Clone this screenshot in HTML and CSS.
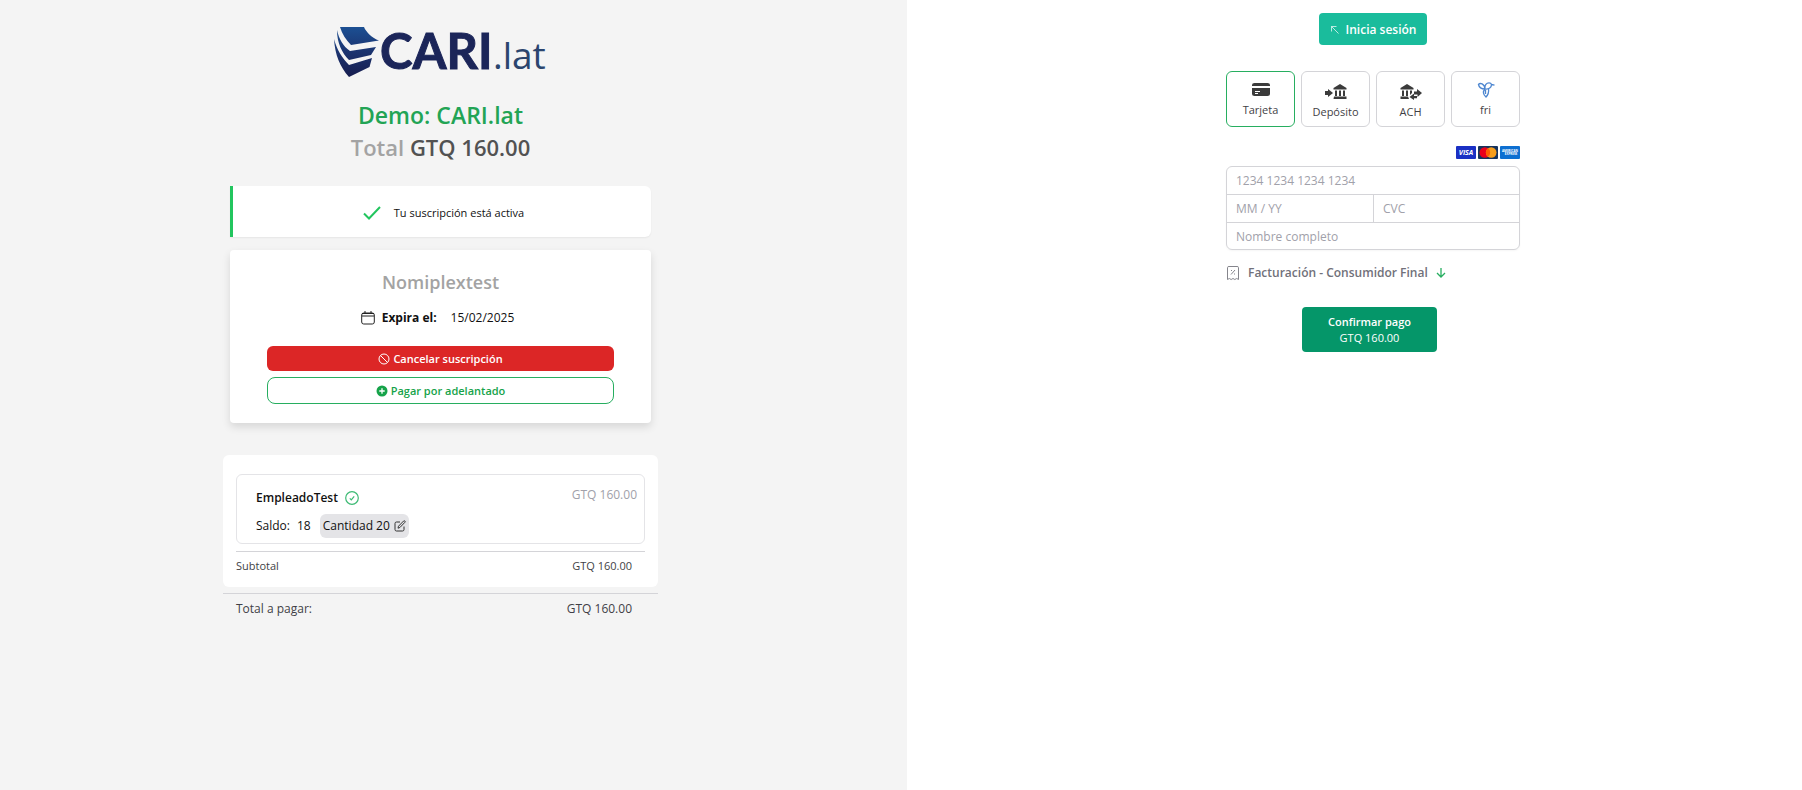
FILE: index.html
```html
<!DOCTYPE html>
<html lang="es">

<head>
    <title>Demo: CARI.lat</title>
    <meta charset="UTF-8" />
    <meta name="viewport" content="width=device-width, initial-scale=1" />
    <link rel="stylesheet" href="styles.css">
</head>

<body>
    <div class="checkout">
        <!-- Summary - START -->
        <main class="summary">
            <svg class="logo" viewBox="0 0 214 54" role="img" aria-label="CARI.lat">
                <defs>
                    <linearGradient id="logoBlue" gradientUnits="userSpaceOnUse" x1="20" y1="0" x2="20" y2="52">
                        <stop offset="0" stop-color="#1c5296" />
                        <stop offset=".5" stop-color="#1b3470" />
                        <stop offset="1" stop-color="#171d4f" />
                    </linearGradient>
                </defs>
                <path fill="url(#logoBlue)" d="M6 2h24c2 5 8 11 15 13.500L17 20C12 15 8 9 6 2z" />
                <path fill="url(#logoBlue)" d="M3 5c2 9 6 16 13 21l26-4-5 8-22 5C8 28 3 18 3 5z" />
                <path fill="url(#logoBlue)" d="M0 14c3 11 8 19 15 26l23-7-2.500 9L15 52C6 42 1 30 0 14z" />
                <text class="logo__main" x="46" y="44">CARI</text>
                <text class="logo__suffix" x="159" y="44">.lat</text>
            </svg>

            <h1 class="summary__title">Demo: CARI.lat</h1>
            <p class="summary__total"><span>Total</span> GTQ 160.00</p>

            <div class="alert">
                <svg class="alert__icon" viewBox="0 0 18 14" fill="none" stroke="#22c55e" stroke-width="2">
                    <path d="M1 7.500l5 5L17 1" />
                </svg>
                Tu suscripción está activa
            </div>

            <section class="plan">
                <h2 class="plan__title">Nomiplextest</h2>
                <div class="plan__expires">
                    <svg class="plan__icon" viewBox="0 0 14 14" fill="none" stroke="#222">
                        <rect x=".7" y="2" width="12.600" height="11" rx="2" />
                        <path d="M1 2.500h12M1 5h12M4 0v2M10 0v2" />
                    </svg>
                    <strong>Expira el:</strong>
                    <span class="plan__date">15/02/2025</span>
                </div>
                <button class="btn btn--cancel">
                    <svg class="btn__icon" viewBox="0 0 12 12" fill="none" stroke="currentColor">
                        <circle cx="6" cy="6" r="5" />
                        <path d="M2.500 2.500l7 7" />
                    </svg>
                    Cancelar suscripción
                </button>
                <button class="btn btn--advance">
                    <svg class="btn__icon" viewBox="0 0 12 12">
                        <circle cx="6" cy="6" r="5.500" fill="currentColor" />
                        <path d="M6 3.300v5.400M3.300 6h5.400" stroke="#fff" stroke-width="1.300" />
                    </svg>
                    Pagar por adelantado
                </button>
            </section>

            <section class="order">
                <div class="order__box">
                    <div class="item">
                        <div>
                            <div class="item__name">
                                EmpleadoTest
                                <svg class="item__check" viewBox="0 0 14 14" fill="none" stroke="#3dba74" stroke-width="1.200">
                                    <circle cx="7" cy="7" r="6.300" />
                                    <path d="M4.800 7.400l1.500 1.500 2.900-3.500" />
                                </svg>
                            </div>
                            <div class="item__detail">
                                <span>Saldo:</span>
                                <span>18</span>
                                <button class="item__edit">
                                    Cantidad 20
                                    <svg class="item__pencil" viewBox="0 0 12 12" fill="none" stroke="#333">
                                        <path d="M6 2H2.500Q1 2 1 3.500v6Q1 11 2.500 11h6q1.500 0 1.500-1.500V6.500" />
                                        <path d="M4 8.200l.5-2L9.600 1q.7-.6 1.300 0t0 1.300L5.900 7.500z" />
                                    </svg>
                                </button>
                            </div>
                        </div>
                        <span class="item__price">GTQ 160.00</span>
                    </div>
                    <div class="order__subtotal">
                        <span>Subtotal</span>
                        <span>GTQ 160.00</span>
                    </div>
                </div>
                <div class="order__total">
                    <span>Total a pagar:</span>
                    <span>GTQ 160.00</span>
                </div>
            </section>
        </main>
        <!-- Summary - END -->

        <!-- Payment - START -->
        <aside class="payment">
            <button class="login">
                <svg class="login__icon" viewBox="0 0 10 10" fill="none" stroke="currentColor" stroke-opacity=".7">
                    <path d="M8.500 8.500L1.500 1.500M1.500 6.500v-5h5" />
                </svg>
                Inicia sesión
            </button>

            <form class="form">
                <div class="methods">
                    <button type="button" class="method method--active">
                        <svg class="method__icon" viewBox="0 0 22 16">
                            <path fill="#3b3b3b" d="M4.500 1h13Q20 1 20 3v1H2V3q0-2 2.500-2zM2 6h18v6q0 2-2.500 2h-13Q2 14 2 12z" />
                            <path stroke="#fff" d="M5 9.500h5M5 11.500h3" />
                        </svg>
                        Tarjeta
                    </button>
                    <button type="button" class="method method--bank">
                        <svg class="method__icon" viewBox="0 0 22 16" fill="#3b3b3b">
                            <path d="M0 7h3V5l5 4-5 4v-2H0z" />
                            <path d="M15 0l6.500 4v1.500h-13V4zM10 6.500h2V12h-2zM14 6.500h2V12h-2zM18 6.500h2V12h-2zM9 12.500h12.500V15H8.500z" />
                        </svg>
                        Depósito
                    </button>
                    <button type="button" class="method method--bank">
                        <svg class="method__icon" viewBox="0 0 22 16" fill="#3b3b3b">
                            <path d="M7 0l6.500 4v1.500H.5V4zM2 6.500h2V12H2zM6 6.500h2V12H6zM10 6.500h2V9l-2 2zM.5 12.500H8l1 2.500H.5z" />
                            <path d="M14 7.500h3V5l5 4-4.500 4v-2.500H14zM17 12h-3V9.500L9.500 13l4.500 3v-1.800h3z" />
                        </svg>
                        ACH
                    </button>
                    <button type="button" class="method">
                        <svg class="method__icon" viewBox="0 0 22 16" fill="none" stroke="#4d86d0" stroke-width="1.300">
                            <path d="M10 7C6 7 4 5 3.500 2.500 5 .5 9.500 1.500 10 7zM10 7C9.500 3 11.500.8 14 .8q2 0 2.500 1.700C16.500 5.500 14 7.500 10 7zM16.500 2.500l3 .7" />
                            <path d="M10 7C7.500 9.500 8 12.500 11 15c2.500-2.500 3-5 2.500-8.500M10.500 8v4" />
                        </svg>
                        fri
                    </button>
                </div>

                <div class="brands">
                    <svg class="brand" viewBox="0 0 20 13" role="img" aria-label="Visa">
                        <rect width="20" height="13" rx="1" fill="#1a30c4" />
                        <text class="brand__visa" x="10" y="9" text-anchor="middle">VISA</text>
                    </svg>
                    <svg class="brand" viewBox="0 0 20 13" role="img" aria-label="Mastercard">
                        <rect width="20" height="13" rx="1" fill="#17335c" />
                        <circle cx="6.800" cy="6.500" r="5.300" fill="#eb001b" />
                        <circle cx="13.200" cy="6.500" r="5.300" fill="#f79e1b" />
                        <path d="M10 2.200a5.300 5.300 0 0 1 0 8.600 5.300 5.300 0 0 1 0-8.600z" fill="#ff5f00" />
                    </svg>
                    <svg class="brand" viewBox="0 0 20 13" role="img" aria-label="American Express">
                        <rect width="20" height="13" rx="1" fill="#0d6fd1" />
                        <text class="brand__amex" x="10" y="6" text-anchor="middle">AMERICAN</text>
                        <text class="brand__amex" x="11" y="9" text-anchor="middle">EXPRESS</text>
                    </svg>
                </div>

                <div class="card">
                    <input type="text" name="number" placeholder="1234 1234 1234 1234" aria-label="Número de tarjeta" class="card__wide" />
                    <input type="text" name="expiry" placeholder="MM / YY" aria-label="Vencimiento" />
                    <input type="text" name="cvc" placeholder="CVC" aria-label="CVC" class="card__cvc" />
                    <input type="text" name="fullName" placeholder="Nombre completo" aria-label="Nombre completo" class="card__wide" />
                </div>

                <button type="button" class="billing">
                    <svg class="billing__icon" viewBox="0 0 14 16" fill="none" stroke="#85858c">
                        <path d="M1.500 14.500V2.500Q1.500 1.500 3 1.500h8q1.500 0 1.500 1v12l-1.800-1-1.900 1-1.800-1-1.800 1-1.900-1z" />
                        <path d="M5 9.500l4-4.500M5 5.500h1M8 9h1" />
                    </svg>
                    Facturación - Consumidor Final
                    <svg class="billing__arrow" viewBox="0 0 10 12" fill="none" stroke="#27ae60" stroke-width="1.300">
                        <path d="M5 1v9M1 6l4 4 4-4" />
                    </svg>
                </button>

                <button type="submit" class="confirm">
                    <strong>Confirmar pago</strong>
                    <span>GTQ 160.00</span>
                </button>
            </form>
        </aside>
        <!-- Payment - END -->
    </div>
</body>

</html>
```
FILE: styles.css
```css
:root {
    --page-bg: #f4f4f4;
    --green: #16a34a;
    --green-line: #27ae60;
    --red: #dc2626;
    --line: #d4d4d8;
    --muted: #a1a1aa;
    --text: #3f3f46;
}

* {
    box-sizing: border-box;
}

body {
    margin: 0;
    font-family: "Open Sans", "Noto Sans", sans-serif;
    font-size: 12px;
    line-height: 20px;
    color: #111;
    background-color: white;
}

h1,
h2,
p {
    margin: 0;
}

button,
input {
    font: inherit;
    color: inherit;
}

button {
    border: none;
    background: none;
    cursor: pointer;
}

svg {
    flex-shrink: 0;
}

.checkout {
    display: grid;
    grid-template-columns: 907fr 895fr;
    min-height: 100vh;
}

/* Summary - START */
.summary {
    display: flex;
    flex-direction: column;
    align-items: center;
    padding: 25px 26px 40px 0;
    background-color: var(--page-bg);
}

.logo {
    width: 214px;
    height: 54px;
    margin-bottom: 20px;
    overflow: visible;
}

.logo__main {
    font-family: Lato, sans-serif;
    font-size: 49px;
    font-weight: 700;
    fill: #1b2559;
    stroke: #1b2559;
    stroke-width: 1px;
}

.logo__suffix {
    font-size: 37px;
    fill: #2b456e;
}

.summary__title,
.summary__total {
    font-weight: 600;
    line-height: 32px;
}

.summary__title {
    font-size: 23px;
    color: #22a455;
}

.summary__total {
    font-size: 22px;
    color: #525252;
}

.summary__total span {
    color: #a3a3a3;
}

.alert {
    display: flex;
    justify-content: center;
    align-items: center;
    gap: 13px;
    width: 100%;
    max-width: 421px;
    height: 51px;
    margin-top: 23px;
    padding: 2px 0 0 3px;
    font-size: 11px;
    background-color: white;
    border-left: 3px solid #22c55e;
    border-radius: 0 6px 6px 0;
    box-shadow: 0 1px 2px rgba(0, 0, 0, 0.06);
}

.alert__icon {
    width: 18px;
    height: 14px;
}

.plan {
    display: flex;
    flex-direction: column;
    align-items: center;
    width: 100%;
    max-width: 421px;
    margin-top: 13px;
    padding: 18px 37px 19px;
    background-color: white;
    border-radius: 4px;
    box-shadow: 0 4px 8px rgba(0, 0, 0, 0.12);
}

.plan__title {
    font-size: 18px;
    font-weight: 600;
    line-height: 28px;
    color: #a3a3a3;
}

.plan__expires {
    display: flex;
    align-items: center;
    gap: 7px;
    margin: 12px 0 18px;
    padding-right: 6px;
}

.plan__icon {
    width: 14px;
    height: 14px;
}

.plan__date {
    margin-left: 7px;
}

.btn {
    display: flex;
    justify-content: center;
    align-items: center;
    gap: 3px;
    width: 100%;
    font-size: 11px;
    font-weight: 600;
    border-radius: 6px;
}

.btn__icon {
    width: 12px;
    height: 12px;
}

.btn--cancel {
    height: 25px;
    color: white;
    background-color: var(--red);
}

.btn--advance {
    height: 27px;
    margin-top: 6px;
    color: var(--green);
    border: 1px solid var(--green-line);
    border-radius: 8px;
}

.order {
    width: 100%;
    max-width: 435px;
    margin-top: 32px;
    color: var(--text);
}

.order__box {
    padding: 19px 13px 10px;
    background-color: white;
    border-radius: 6px;
}

.item {
    display: flex;
    justify-content: space-between;
    height: 70px;
    padding: 10px 7px 5px 19px;
    color: #111;
    border: 1px solid #e4e4e7;
    border-radius: 6px;
}

.item__name,
.item__detail {
    display: flex;
    align-items: center;
    gap: 7px;
}

.item__name {
    height: 25px;
    font-weight: 600;
}

.item__check {
    width: 14px;
    height: 14px;
}

.item__detail {
    height: 31px;
}

.item__edit {
    display: flex;
    align-items: center;
    gap: 4px;
    height: 24px;
    margin-left: 2px;
    padding: 0 3px;
    background-color: #e4e4e7;
    border-radius: 6px;
}

.item__pencil {
    width: 12px;
    height: 12px;
}

.item__price {
    color: var(--muted);
}

.order__subtotal,
.order__total {
    display: flex;
    justify-content: space-between;
    font-weight: 500;
    border-top: 1px solid var(--line);
}

.order__subtotal {
    margin-top: 7px;
    padding: 4px 13px 1px 0;
    font-size: 11px;
}

.order__total {
    margin-top: 6px;
    padding: 5px 26px 0 13px;
}
/* Summary - END */

/* Payment - START */
.payment {
    display: flex;
    flex-direction: column;
    align-items: center;
    padding: 13px 0 40px 37px;
}

.login {
    display: flex;
    align-items: center;
    gap: 6px;
    height: 32px;
    padding: 1px 11px 0;
    font-weight: 600;
    color: white;
    background-color: #1abc9c;
    border-radius: 4px;
}

.login__icon {
    width: 10px;
    height: 10px;
}

.form {
    width: 100%;
    max-width: 294px;
    margin-top: 26px;
}

.methods {
    display: grid;
    grid-template-columns: repeat(4, 1fr);
    gap: 6px;
}

.method {
    display: flex;
    flex-direction: column;
    justify-content: center;
    align-items: center;
    gap: 4px;
    height: 56px;
    padding: 2px 0 0;
    font-size: 11px;
    line-height: 16px;
    color: var(--text);
    border: 1px solid var(--line);
    border-radius: 6px;
}

.method--active {
    border-color: var(--green-line);
}

.method--bank {
    padding-top: 6px;
}

.method__icon {
    width: 22px;
    height: 16px;
}

.brands {
    display: flex;
    justify-content: flex-end;
    gap: 2px;
    margin: 19px 0 7px;
}

.brand {
    width: 20px;
    height: 13px;
}

.brand__visa {
    font-size: 7px;
    font-style: italic;
    font-weight: 700;
    fill: white;
}

.brand__amex {
    font-size: 3px;
    font-weight: 700;
    fill: white;
}

.card {
    display: grid;
    grid-template-columns: 1fr 1fr;
    border: 1px solid var(--line);
    border-radius: 6px;
    box-shadow: 0 1px 2px rgba(0, 0, 0, 0.04);
}

.card input {
    width: 100%;
    height: 28px;
    padding: 0 9px;
    border: none;
    background: none;
}

.card input::placeholder {
    color: var(--muted);
    opacity: 1;
}

.card .card__wide {
    grid-column: span 2;
    height: 27px;
}

.card input + input {
    border-top: 1px solid var(--line);
}

.card .card__cvc {
    border-left: 1px solid var(--line);
}

.billing {
    display: flex;
    align-items: center;
    gap: 8px;
    margin-top: 13px;
    padding: 0;
    font-weight: 600;
    color: #71717a;
}

.billing__icon {
    width: 14px;
    height: 16px;
}

.billing__arrow {
    width: 10px;
    height: 12px;
}

.confirm {
    display: flex;
    flex-direction: column;
    justify-content: center;
    align-items: center;
    width: 135px;
    height: 45px;
    margin: 24px 0 0 76px;
    padding: 0;
    font-size: 11px;
    line-height: 16px;
    color: white;
    background-color: #059669;
    border-radius: 4px;
}

.confirm strong {
    font-weight: 600;
}
/* Payment - END */
```
